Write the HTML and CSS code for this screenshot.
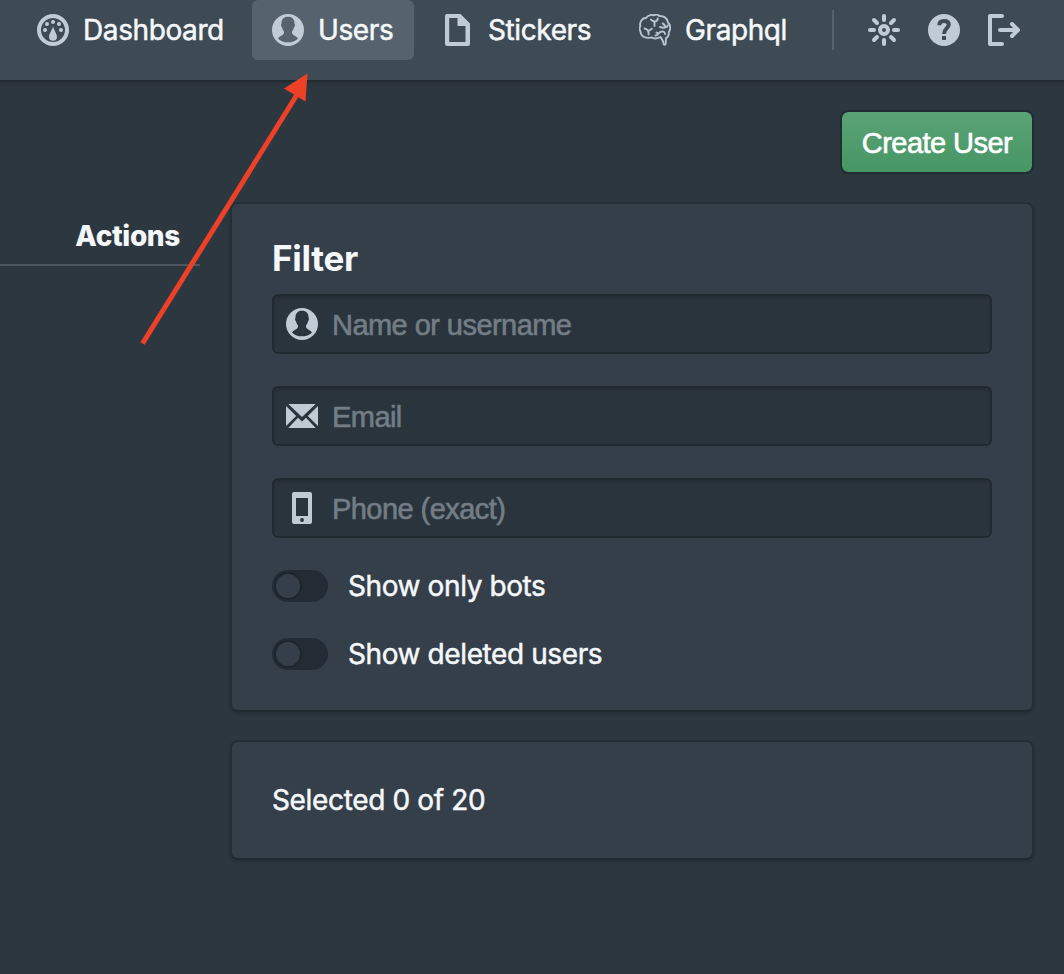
FILE: index.html
```html
<!DOCTYPE html>
<html lang="en">
<head>
<meta charset="utf-8">
<title>Users</title>
<link rel="stylesheet" href="styles.css">
</head>
<body>
<svg class="defs" width="0" height="0">
  <symbol id="user" viewBox="0 0 32 32"><path fill-rule="evenodd" d="M16 0a16 16 0 1 0 0 32a16 16 0 1 0 0-32zM16 2.800C20.300 2.800 22.700 5.500 22.500 9.800C23.300 10.600 23 12.500 22 13.600C21.500 15.700 20.300 16.700 20 17.800C19.600 21.300 23.300 21.200 26 24.400C23.500 27 19.700 28.300 16 28.300C12.300 28.300 8.500 27 6 24.400C8.700 21.200 12.400 21.300 12 17.800C11.700 16.700 10.500 15.700 10 13.600C9 12.500 8.700 10.600 9.500 9.800C9.300 5.500 11.700 2.800 16 2.800z"/></symbol>
</svg>
<header class="navbar">
  <a class="tab tab-dashboard"><svg class="icon" viewBox="0 0 32 32"><circle class="line" cx="16" cy="16" r="14"/><circle cx="8" cy="16" r="2"/><circle cx="10" cy="10" r="2"/><circle cx="16" cy="8" r="2"/><circle cx="22" cy="10" r="2"/><circle cx="24" cy="16" r="2"/><path d="M16 12.500C17 16 20 20 20 22.800a4 4 0 0 1-8 0C12 20 15 16 16 12.500z"/></svg><span>Dashboard</span></a>
  <a class="tab tab-users active"><svg class="icon"><use href="#user"/></svg><span>Users</span></a>
  <a class="tab tab-stickers"><svg class="icon" viewBox="0 0 32 32"><path fill-rule="evenodd" d="M5 0H18.500L28 9.500V30a2 2 0 0 1-2 2H5a2 2 0 0 1-2-2V2a2 2 0 0 1 2-2zM7.200 4V28H23.500V12H15.500V4z"/></svg><span>Stickers</span></a>
  <a class="tab tab-graphql"><svg class="icon brain" viewBox="0 0 32 32"><path d="M1.500 17.500C.300 15.500.500 13.500 1.300 12.500C.300 8 3 4 7.300 3.800C8.500 1.500 12 .200 14.700 1.400C16.500.300 19 .600 20.300 2C24.500 1.600 28.300 4 28.800 8.200C31.500 10.500 32 15.500 29.800 17.800C30.200 21.500 28.500 23.300 27 24L26.700 29.500Q26.200 31.200 24.800 30.500C24.700 27 23 25.500 21.500 23C18.500 24.500 14.500 24.800 12.300 23.300C8 24.700 2 23.500 1.500 17.500zM5.500 14.500C8 14.800 10 16.500 9.500 20.500M9.300 17.300L12.800 14.800M12 5.500C13.500 8 15 6 15.500 8.500V12M15.500 7.500C17.500 7.500 18.500 6 18.800 4.500M21 13C24 14.200 28 14 28.700 11.500M26 13C26 11 25 10 23.700 9.500M16.500 21.500C19.500 21.500 19 18 23 17.500C25 17.200 26 18.500 26 20M19 19.500L17.500 18.500"/></svg><span>Graphql</span></a>
  <i class="divider"></i>
  <nav class="tools">
    <svg class="icon" viewBox="0 0 32 32"><circle class="line" cx="16" cy="16" r="4"/><path class="line" d="M16 2v4M16 26v4M2 16h4M26 16h4M6 6l3 3M23 23l3 3M26 6l-3 3M9 23l-3 3"/></svg>
    <svg class="icon" viewBox="0 0 32 32"><circle cx="16" cy="16" r="16"/><path class="question" d="M11.300 11.300C11.300 8.300 13 7 16 7C19 7 20.800 8.300 20.800 10.600C20.800 14 16 14.500 16 20M16 22v4"/></svg>
    <svg class="icon" viewBox="0 0 32 32"><path class="line" d="M14 2H2V30H14M12 16H29M24 10l6 6l-6 6"/></svg>
  </nav>
</header>
<main class="page">
  <aside class="sidebar"><h2 class="sidebar-title">Actions</h2></aside>
  <section class="content">
    <button class="create">Create User</button>
    <div class="card filter">
      <h1 class="title">Filter</h1>
      <label class="field"><svg class="icon"><use href="#user"/></svg><input class="input name" placeholder="Name or username"></label>
      <label class="field"><svg class="icon" viewBox="0 0 32 32"><path d="M2.300 4H29.700L16 17zM0 6L10.200 16L0 26zM32 6V26L21.800 16zM2.300 28L12 17.700L16 21.500L20 17.700L29.700 28z"/></svg><input class="input email" placeholder="Email"></label>
      <label class="field"><svg class="icon" viewBox="0 0 32 32"><path fill-rule="evenodd" d="M8 0H24a2 2 0 0 1 2 2V30a2 2 0 0 1-2 2H8a2 2 0 0 1-2-2V2a2 2 0 0 1 2-2zM10 6V24H22V6zM16 26a2 2 0 1 0 0 4a2 2 0 1 0 0-4z"/></svg><input class="input phone" placeholder="Phone (exact)"></label>
      <div class="switch"><i class="track"><i class="knob"></i></i><span class="bots">Show only bots</span></div>
      <div class="switch"><i class="track"><i class="knob"></i></i><span class="deleted">Show deleted users</span></div>
    </div>
    <div class="card summary"><span>Selected 0 of 20</span></div>
  </section>
</main>
<svg class="arrow" viewBox="0 0 180 280"><path d="M12.500 273.500L168 23" stroke="#ee4026" stroke-width="5"/><path d="M177.500 3.500L154 18.500L175.500 31.500z" fill="#ee4026"/></svg>
</body>
</html>
```
FILE: styles.css
```css
* { box-sizing: border-box; }
body {
  margin: 0;
  width: 1064px;
  height: 974px;
  overflow: hidden;
  position: relative;
  background: #2d3740;
  color: #f5f8fa;
  font: 28px/36px Inter, "Liberation Sans", sans-serif;
}
.defs { position: absolute; }
.icon { display: block; flex: none; width: 32px; height: 32px; fill: #c1cbd5; }
.line { fill: none; stroke: #c1cbd5; stroke-width: 4; stroke-linecap: round; stroke-linejoin: round; }
.question { fill: none; stroke: #3e4b55; stroke-width: 4; }
.brain { fill: none; stroke: #b9c4ce; stroke-width: 1.9; stroke-linecap: round; stroke-linejoin: round; }
.navbar {
  display: flex;
  align-items: flex-start;
  height: 80px;
  padding-left: 17px;
  background: #3e4b55;
  box-shadow: 0 1px 0 1px #202a30, 0 2px 4px 1px rgba(16, 22, 26, .25);
}
.tab {
  display: flex;
  align-items: center;
  gap: 14px;
  height: 60px;
  margin-right: 8px;
  padding-left: 20px;
  border-radius: 6px;
  white-space: nowrap;
  letter-spacing: -.4px;
}
.tab span, .switch span, .summary span { -webkit-text-stroke: .5px #f5f8fa; }
.tab-dashboard { width: 227px; }
.tab-users { width: 162px; }
.tab-stickers { width: 189px; }
.tab-graphql { width: 189px; margin-right: 24px; }
.active { background: #56626d; }
.divider { width: 2px; height: 40px; margin-top: 10px; background: #56626b; }
.tools { display: flex; gap: 28px; padding: 14px 0 0 34px; }
.page { display: flex; justify-content: space-between; padding: 30px 30px 0 0; }
.sidebar { width: 200px; padding-top: 108px; }
.sidebar-title {
  margin: 0;
  height: 48px;
  padding-right: 20px;
  border-bottom: 2px solid #4b565f;
  text-align: right;
  font-size: 28px;
  line-height: 36px;
  font-weight: 800;
  letter-spacing: -.35px;
}
.content { display: flex; flex-direction: column; width: 804px; }
.create {
  align-self: flex-end;
  width: 194px;
  height: 64px;
  padding: 1px 0 0;
  border: 2px solid #222c33;
  border-radius: 8px;
  background: linear-gradient(#5aa376, #469664) padding-box;
  color: #fff;
  font: 29px/36px "Liberation Sans", Arial, sans-serif;
  letter-spacing: -.55px;
  -webkit-text-stroke: .6px #fff;
}
.card {
  border: 2px solid #252f37;
  border-bottom-color: #202a31;
  border-radius: 8px;
  background: #343f4a;
  box-shadow: 0 2px 3px rgba(16, 22, 26, .2);
}
.filter { height: 510px; margin-top: 28px; padding: 32px 40px 0; }
.summary { height: 120px; margin-top: 28px; padding: 40px 40px 0; letter-spacing: -.35px; }
.title { margin: 0 0 14px; font-size: 35px; line-height: 44px; font-weight: 700; letter-spacing: -.25px; }
.field {
  display: flex;
  align-items: center;
  gap: 14px;
  height: 60px;
  margin-bottom: 32px;
  padding-left: 12px;
  border: 2px solid #202a30;
  border-radius: 6px;
  background: #2a343c;
  box-shadow: inset 0 2px 2px rgba(16, 22, 26, .15);
}
.input {
  flex: 1;
  min-width: 0;
  padding: 1px 0 0;
  border: 0;
  outline: 0;
  background: none;
  color: #f5f8fa;
  font: 29px/36px "Liberation Sans", Arial, sans-serif;
  letter-spacing: -.55px;
}
.input::placeholder { color: #737d86; opacity: 1; -webkit-text-stroke: .6px #737d86; }
.switch { display: flex; align-items: center; gap: 20px; height: 32px; margin-bottom: 36px; letter-spacing: -.4px; }
.track { display: flex; align-items: center; width: 56px; height: 32px; padding-left: 2px; border-radius: 16px; background: #232b34; }
.knob { width: 28px; height: 28px; border: 2px solid #1d262c; border-radius: 50%; background: #343f4a; }
.arrow { position: absolute; left: 130px; top: 70px; width: 180px; height: 280px; fill: none; }
```
